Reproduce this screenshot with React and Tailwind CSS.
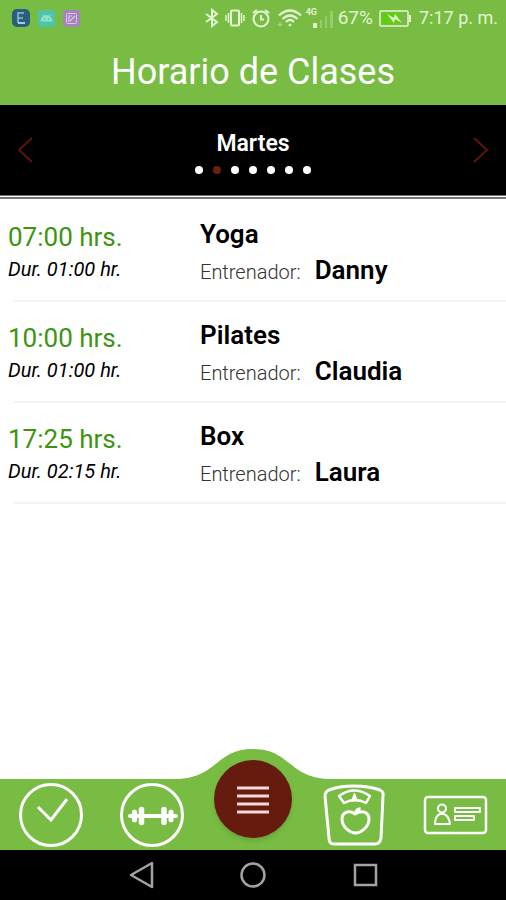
import React, { useState } from "react";

const days = ["Lunes", "Martes", "Miércoles", "Jueves", "Viernes", "Sábado", "Domingo"];

const classes = [
  { time: "07:00 hrs.", duration: "Dur. 01:00 hr.", name: "Yoga", trainer: "Danny" },
  { time: "10:00 hrs.", duration: "Dur. 01:00 hr.", name: "Pilates", trainer: "Claudia" },
  { time: "17:25 hrs.", duration: "Dur. 02:15 hr.", name: "Box", trainer: "Laura" },
];

const StatusBar = () => (
  <div className="flex h-9 items-center justify-between pl-3 pr-2 text-[#e4f5d3]">
    <div className="flex items-center gap-2">
      <svg width="18" height="18" viewBox="0 0 18 18" fill="none">
        <rect width="18" height="18" rx="5" fill="#285f7c" />
        <path d="M12 4H6v10M6 9h5" stroke="#8fc0cc" strokeWidth="1.5" />
        <path d="M6 14h7" stroke="#d5f0f0" strokeWidth="1.5" />
      </svg>
      <svg width="17" height="17" viewBox="0 0 17 17" fill="none">
        <rect width="17" height="17" rx="3" fill="#4cc5ab" />
        <path d="M3 11a5.5 5.5 0 0 1 11 0zM4.5 4.5l1.5 2M12.5 4.5l-1.5 2" fill="#8fe0c4" stroke="#8fe0c4" />
        <path d="M6 9h1M10 9h1" stroke="#3aa892" strokeWidth="1.2" />
      </svg>
      <svg width="17" height="17" viewBox="0 0 17 17" fill="none">
        <rect width="17" height="17" rx="4" fill="#a783bd" />
        <rect x="3.5" y="3.5" width="10" height="10" rx="1" stroke="#dcc8e6" />
        <path d="M6 12V6h3M7 11l5-5" stroke="#dcc8e6" strokeWidth="1.2" />
      </svg>
    </div>
    <div className="flex items-center gap-1">
      <div className="flex items-center gap-1.5">
        <svg width="14" height="20" viewBox="0 0 14 20" fill="none" stroke="currentColor" strokeWidth="2">
          <path d="M1 6l11 8-5 4V2l5 4L1 14" />
        </svg>
        <svg width="20" height="18" viewBox="0 0 20 18" fill="none" stroke="currentColor">
          <rect x="6" y="1.5" width="8" height="15" rx="1" strokeWidth="2" />
          <path d="M3.5 4v10M1 6v6M16.5 4v10M19 6v6" strokeWidth="1.5" />
        </svg>
        <svg width="20" height="20" viewBox="0 0 20 20" fill="none" stroke="currentColor" strokeWidth="2">
          <circle cx="10" cy="11" r="7.5" />
          <path d="M10 7v4.5h3M2 5l4-3M18 5l-4-3" />
        </svg>
        <svg width="25" height="18" viewBox="0 0 25 18" fill="none" stroke="currentColor" strokeWidth="2.2">
          <path d="M2 6.5q11-10 22 0M5.5 10q7.5-7 15 0M9 13q4-4 8 0" />
          <circle cx="13" cy="16" r="1" fill="currentColor" strokeWidth="1" />
          <path d="M3 13v4M1 15l2 2 2-2" strokeWidth="1" opacity=".6" />
        </svg>
      </div>
      <div className="relative h-6 w-7">
        <span className="absolute left-0 top-0 text-[9px] leading-3 font-bold">4G</span>
        <svg className="absolute bottom-0 right-0" width="22" height="20" viewBox="0 0 22 20" fill="currentColor">
          <rect x="1" y="13" width="4" height="5" />
          <path d="M8 10h2v8H8zM13 6h2v12h-2zM18 1h3v17h-3z" opacity=".3" />
        </svg>
      </div>
      <span className="pr-0.5 text-[19px] leading-6">67%</span>
      <svg width="32" height="17" viewBox="0 0 32 17" fill="none" stroke="currentColor">
        <rect x="1" y="1" width="28" height="15" rx="1" strokeWidth="1.5" />
        <rect x="3" y="3" width="18" height="11" fill="#62cc12" stroke="none" />
        <path d="M31 5v7" strokeWidth="2" />
        <path d="M8 4l7 4 1-4 7 9-7-4-1 4z" fill="currentColor" stroke="none" />
      </svg>
      <span className="pl-1 text-[18px] leading-6">7:17 p. m.</span>
    </div>
  </div>
);

const DayPicker = ({ day, setDay }) => (
  <div className="flex h-[90px] items-center justify-between bg-black px-4">
    <button aria-label="Día anterior" onClick={() => setDay((day + 6) % 7)}>
      <svg width="18" height="28" viewBox="0 0 18 28" fill="none" stroke="#5e140c" strokeWidth="2">
        <path d="M16 2L3 14l13 12" />
      </svg>
    </button>
    <div className="flex flex-col items-center gap-2 pt-1">
      <h2 className="text-[23px] leading-7 font-semibold text-white">{days[day]}</h2>
      <div className="flex gap-[10px]">
        {days.map((d, i) => (
          <span key={d} className={`h-2 w-2 rounded-full ${i === day ? "bg-[#6b2010]" : "bg-white"}`}></span>
        ))}
      </div>
    </div>
    <button aria-label="Día siguiente" onClick={() => setDay((day + 1) % 7)}>
      <svg width="18" height="28" viewBox="0 0 18 28" fill="none" stroke="#5e140c" strokeWidth="2">
        <path d="M2 2l13 12L2 26" />
      </svg>
    </button>
  </div>
);

const ClassRow = ({ item }) => (
  <li>
    <div className="flex h-[99px] items-center pl-2">
      <div className="w-48 shrink-0 pt-1">
        <p className="text-[26px] leading-8 text-[#3c9411]">{item.time}</p>
        <p className="text-[20px] leading-8 text-black italic">{item.duration}</p>
      </div>
      <div className="pt-1">
        <p className="text-[26px] leading-9 font-semibold text-black">{item.name}</p>
        <p className="flex items-baseline gap-3.5 leading-9">
          <span className="text-[20px] font-light text-[#333333]">Entrenador:</span>
          <span className="text-[26px] font-semibold text-black">{item.trainer}</span>
        </p>
      </div>
    </div>
    <div className="ml-3.5 h-0.5 bg-[#f4f4f4]"></div>
  </li>
);

const ClockIcon = () => (
  <svg width="66" height="66" viewBox="0 0 66 66" fill="none" stroke="white" strokeWidth="3">
    <circle cx="33" cy="33" r="30.5" />
    <path d="M20 25l13 13L49 17" />
  </svg>
);

const DumbbellIcon = () => (
  <svg width="66" height="66" viewBox="0 0 66 66" fill="none" stroke="white" strokeLinecap="round">
    <circle cx="33" cy="33" r="30.5" strokeWidth="3" />
    <path d="M11 34h46" strokeWidth="4" />
    <path d="M15.5 30v8M52 30v8" strokeWidth="5" />
    <path d="M22.5 27.5v13M45 27.5v13" strokeWidth="5.5" />
  </svg>
);

const ScaleIcon = () => (
  <svg width="66" height="66" viewBox="0 0 66 66" fill="none" stroke="white" strokeWidth="3" strokeLinejoin="round">
    <path d="M4 14Q4 10 8 8Q18 4 33 4Q48 4 59 8Q63 10 62 14L60 56Q59 62 54 62H13Q8 62 8 56Z" />
    <path d="M18 14Q33 3 49 14L45 21Q34 15 23 21Z" strokeWidth="2.5" />
    <path d="M33.5 11l-3 8h6z" fill="white" strokeWidth="1" />
    <path d="M34 32C30 28 21 29 21 37C21 45 29 51 34.5 51C40 51 48 45 48 37C48 29 39 28 34 32Z" />
    <path d="M34 31q0-4 5-5q0 4-5 5z" fill="white" strokeWidth="1.5" />
  </svg>
);

const CardIcon = () => (
  <svg width="66" height="66" viewBox="0 0 66 66" fill="none" stroke="white" strokeWidth="2.5" strokeLinejoin="round">
    <rect x="3" y="15" width="61" height="36" rx="3" />
    <circle cx="20" cy="26.5" r="4" strokeWidth="2" />
    <path d="M13 42q0-8 5-10h4q5 2 6 10z" strokeWidth="2" />
    <path d="M33 26h25v4H33zM33 34h19v4H33z" strokeWidth="2" />
  </svg>
);

const NavBar = () => (
  <nav className="relative grid h-[71px] grid-cols-5 bg-[#78bc43]">
    {/* hump behind the menu button */}
    <svg className="absolute left-1/2 bottom-full -translate-x-1/2" width="150" height="31" viewBox="0 0 150 31">
      <path d="M0 31C40 29 38 1 75 1C112 1 110 29 150 31Z" fill="#78bc43" />
    </svg>
    <a href="#horario" aria-label="Horario" className="flex items-center justify-center">
      <ClockIcon />
    </a>
    <a href="#rutinas" aria-label="Rutinas" className="flex items-center justify-center">
      <DumbbellIcon />
    </a>
    <div className="relative">
      <button
        aria-label="Menú"
        className="absolute bottom-3 left-1/2 flex h-[78px] w-[78px] -translate-x-1/2 items-center justify-center rounded-full bg-[#651c0f] shadow-md"
      >
        <svg width="34" height="30" viewBox="0 0 34 30" stroke="#f3d8d5" strokeWidth="3">
          <path d="M1 4h32M1 12h32M1 20h32M1 28h32" />
        </svg>
      </button>
    </div>
    <a href="#peso" aria-label="Peso" className="flex items-center justify-center">
      <ScaleIcon />
    </a>
    <a href="#perfil" aria-label="Perfil" className="flex items-center justify-center">
      <CardIcon />
    </a>
  </nav>
);

const SystemBar = () => (
  <div className="flex h-[50px] items-center justify-center gap-[86px] bg-black">
    <button aria-label="Atrás">
      <svg width="26" height="28" viewBox="0 0 26 28" fill="none" stroke="#a3a3a3" strokeWidth="2.5" strokeLinejoin="round">
        <path d="M24 2v24L3 14z" />
      </svg>
    </button>
    <button aria-label="Inicio">
      <svg width="26" height="26" viewBox="0 0 26 26" fill="none" stroke="#a3a3a3" strokeWidth="2.5">
        <circle cx="13" cy="13" r="11.5" />
      </svg>
    </button>
    <button aria-label="Recientes">
      <svg width="26" height="26" viewBox="0 0 26 26" fill="none" stroke="#a3a3a3" strokeWidth="2.5">
        <rect x="3" y="3" width="21" height="20" />
      </svg>
    </button>
  </div>
);

const App = () => {
  const [day, setDay] = useState(1);

  return (
    <div className="flex min-h-screen flex-col bg-white font-[Roboto,sans-serif]">
      <header className="bg-[#78bc43]">
        <StatusBar />
        <h1 className="h-[69px] text-center text-[36px] leading-[72px] text-white">Horario de Clases</h1>
      </header>
      <DayPicker day={day} setDay={setDay} />
      {/* double rule under the day strip */}
      <div className="h-1 border-t border-b-2 border-t-[#777777] border-b-[#777777] bg-white"></div>
      <main className="flex-1 pt-0.5">
        <ul>
          {classes.map((item) => (
            <ClassRow key={item.time} item={item} />
          ))}
        </ul>
      </main>
      <NavBar />
      <SystemBar />
    </div>
  );
};

export default App;
